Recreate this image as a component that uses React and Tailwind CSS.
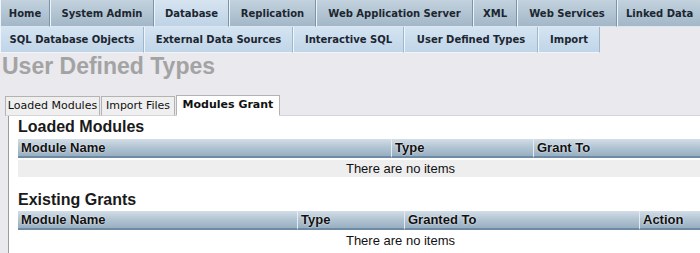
export default function App() {
  const top = [
    { t: "Home", w: 50 },
    { t: "System Admin", w: 104 },
    { t: "Database", w: 75, sel: true },
    { t: "Replication", w: 87 },
    { t: "Web Application Server", w: 157 },
    { t: "XML", w: 44 },
    { t: "Web Services", w: 100 },
    { t: "Linked Data", w: 100, left: true },
  ];
  const sub = [
    { t: "SQL Database Objects", w: 144 },
    { t: "External Data Sources", w: 149 },
    { t: "Interactive SQL", w: 111 },
    { t: "User Defined Types", w: 134 },
    { t: "Import", w: 62 },
  ];
  const hdr =
    "h-[19px] flex items-center pl-[3px] border-l border-[#e4ebf1] border-b-2 border-b-[#6f8ba3] bg-[linear-gradient(to_bottom,#d3dee7_0%,#b4c6d4_45%,#98afc2_100%)] text-[13px] font-bold text-[#111] [text-shadow:0_0_2px_#ffffff]";
  return (
    <div className="w-[700px] h-[253px] overflow-hidden bg-[#e9e9ee] [font-family:'Liberation_Sans',Arial,sans-serif]">
      {/* top nav */}
      <div className="flex whitespace-nowrap [font-family:'DejaVu_Sans',Verdana,sans-serif] text-[10px] font-bold text-[#1c2630]">
        {top.map((x) => (
          <div
            key={x.t}
            style={{ width: x.w }}
            className={
              "shrink-0 h-[27px] flex items-center border-l border-l-[#eef3f7] border-r border-r-[#7d93a6] border-b border-b-[#dde6ee] " +
              (x.left ? "justify-start pl-[8px] " : "justify-center ") +
              (x.sel
                ? "bg-[linear-gradient(to_bottom,#d6e4f0,#bed3e6)]"
                : "bg-[linear-gradient(to_bottom,#c3d2de,#a2b7c8)]")
            }
          >
            {x.t}
          </div>
        ))}
      </div>
      <div className="flex whitespace-nowrap [font-family:'DejaVu_Sans',Verdana,sans-serif] text-[10px] font-bold text-[#1c2630]">
        {sub.map((x) => (
          <div
            key={x.t}
            style={{ width: x.w }}
            className="shrink-0 h-[26px] flex items-center justify-center border-l border-l-[#eef4f9] border-r border-r-[#9fb7cb] border-b border-b-[#f2f5f8] bg-[linear-gradient(to_bottom,#d4e4f2,#c0d5e8)]"
          >
            {x.t}
          </div>
        ))}
      </div>
      {/* title */}
      <div className="mt-[2px] pl-[2px] text-[23px] leading-[23px] font-bold text-[#a3a3a3]">
        User Defined Types
      </div>
      {/* sub tabs */}
      <div className="mt-[17px] pl-[5px] flex gap-[1px] items-end [font-family:'DejaVu_Sans',Verdana,sans-serif] text-[11px] text-[#111] relative z-10">
        <div className="w-[95px] h-[20px] flex items-center justify-center border border-[#b3b3b3] border-b-[#d4d4da] bg-[#efefef]">
          Loaded Modules
        </div>
        <div className="w-[74px] h-[20px] flex items-center justify-center border border-[#b3b3b3] border-b-[#d4d4da] bg-[#efefef]">
          Import Files
        </div>
        <div className="w-[104px] h-[21px] flex items-center justify-center border border-[#b3b3b3] border-b-white bg-white font-bold">
          Modules Grant
        </div>
      </div>
      {/* panel */}
      <div className="ml-[8px] -mt-[1px] border-l border-l-[#9c9c9c] border-t border-t-[#d4d4da] bg-white h-[200px] pl-[9px] pt-[2px]">
        <div className="text-[16px] leading-[18px] font-bold text-[#1a1a1a]">Loaded Modules</div>
        <div className="mt-[3px] w-[765px]">
          <div className="flex">
            <div className={hdr + " w-[373px] border-l-0"}>Module Name</div>
            <div className={hdr + " w-[142px]"}>Type</div>
            <div className={hdr + " flex-1"}>Grant To</div>
          </div>
          <div className="mt-[2px] h-[17px] flex items-center justify-center bg-[#eeeeee] text-[13px] text-[#111]">
            There are no items
          </div>
        </div>
        <div className="mt-[14px] text-[16px] leading-[18px] font-bold text-[#1a1a1a]">Existing Grants</div>
        <div className="mt-[2px] w-[765px]">
          <div className="flex">
            <div className={hdr + " w-[279px] border-l-0"}>Module Name</div>
            <div className={hdr + " w-[107px]"}>Type</div>
            <div className={hdr + " w-[235px]"}>Granted To</div>
            <div className={hdr + " flex-1"}>Action</div>
          </div>
          <div className="mt-[2px] h-[18px] flex items-center justify-center bg-white text-[13px] text-[#111]">
            There are no items
          </div>
        </div>
      </div>
    </div>
  );
}
